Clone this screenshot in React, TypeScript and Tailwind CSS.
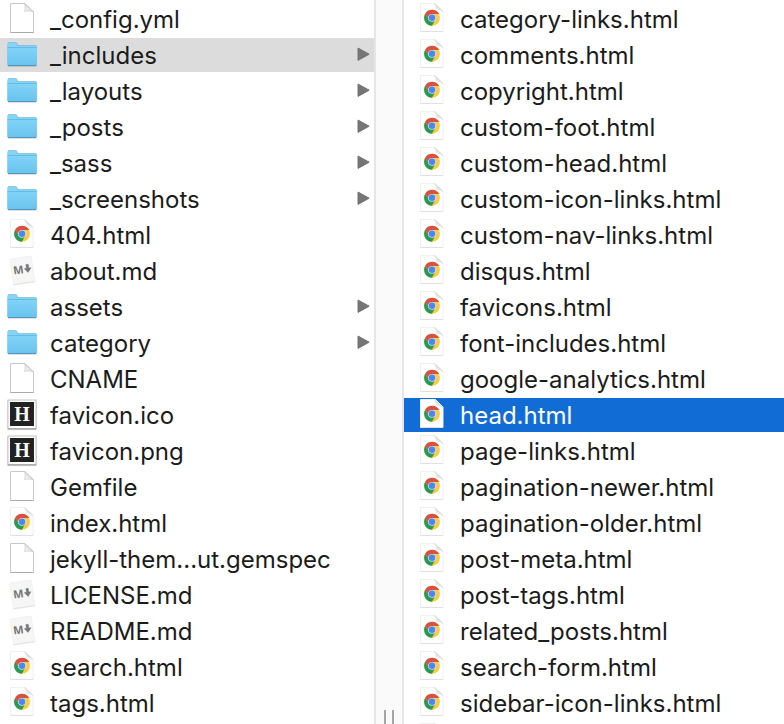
import { useState } from "react";

type Kind = "blank" | "folder" | "chrome" | "markdown" | "favicon";
type Entry = { name: string; kind: Kind };

const rootEntries: Entry[] = [
  { name: "_config.yml", kind: "blank" },
  { name: "_includes", kind: "folder" },
  { name: "_layouts", kind: "folder" },
  { name: "_posts", kind: "folder" },
  { name: "_sass", kind: "folder" },
  { name: "_screenshots", kind: "folder" },
  { name: "404.html", kind: "chrome" },
  { name: "about.md", kind: "markdown" },
  { name: "assets", kind: "folder" },
  { name: "category", kind: "folder" },
  { name: "CNAME", kind: "blank" },
  { name: "favicon.ico", kind: "favicon" },
  { name: "favicon.png", kind: "favicon" },
  { name: "Gemfile", kind: "blank" },
  { name: "index.html", kind: "chrome" },
  { name: "jekyll-them...ut.gemspec", kind: "blank" },
  { name: "LICENSE.md", kind: "markdown" },
  { name: "README.md", kind: "markdown" },
  { name: "search.html", kind: "chrome" },
  { name: "tags.html", kind: "chrome" },
];

const includeEntries: Entry[] = [
  "category-links.html",
  "comments.html",
  "copyright.html",
  "custom-foot.html",
  "custom-head.html",
  "custom-icon-links.html",
  "custom-nav-links.html",
  "disqus.html",
  "favicons.html",
  "font-includes.html",
  "google-analytics.html",
  "head.html",
  "page-links.html",
  "pagination-newer.html",
  "pagination-older.html",
  "post-meta.html",
  "post-tags.html",
  "related_posts.html",
  "search-form.html",
  "sidebar-icon-links.html",
].map((name) => ({ name, kind: "chrome" }));

/* Gradients shared by every file icon */
function IconDefs() {
  return (
    <svg className="absolute size-0" aria-hidden="true">
      <defs>
        <linearGradient id="folder-front" x1="0" y1="0" x2="0" y2="1">
          <stop offset="0" stopColor="#82d3f8" />
          <stop offset="1" stopColor="#69c3ee" />
        </linearGradient>
        <linearGradient id="page-fold" x1="0" y1="1" x2="1" y2="0">
          <stop offset="0" stopColor="#ffffff" />
          <stop offset="0.5" stopColor="#e2e2e2" />
          <stop offset="1" stopColor="#fafafa" />
        </linearGradient>
      </defs>
    </svg>
  );
}

function BlankPage() {
  return (
    <>
      <path d="M4.5 1.5H19L27.5 10V30.5H4.5Z" fill="#fff" stroke="#c9c9c9" />
      <path d="M4.5 30.5H27.5" stroke="#aaa" />
      <path d="M18.5 1.5C19.5 4 19.5 7 18.5 9.5C21 8.7 25 8.8 27.5 10Z" fill="url(#page-fold)" stroke="#c4c4c4" strokeWidth="0.7" />
    </>
  );
}

function Folder() {
  return (
    <>
      <path d="M1.5 6Q1.5 4.3 3 4.3H9.5Q10.5 4.3 11 5.3L12 7.3H29.5Q30.7 7.3 30.7 8.5V27H1.5Z" fill="#62b9e2" />
      <path d="M2 9.3V6Q2 4.8 3.2 4.8H9.3Q10.2 4.8 10.6 5.6L11.7 7.9H29.4Q30.2 7.9 30.2 9.3Z" fill="#86d3f5" />
      <path d="M1.5 9.6H30.7V26.6Q30.7 27.6 29.7 27.6H2.5Q1.5 27.6 1.5 26.6Z" fill="url(#folder-front)" />
      <path d="M1.5 9.5H30.7" stroke="#63b7de" strokeWidth="0.8" />
      <path d="M1.8 27.5H30.4" stroke="#5199ba" strokeWidth="1" />
      <path d="M2 28.5H30.2" stroke="#000" strokeOpacity="0.12" />
    </>
  );
}

function ChromePage() {
  return (
    <>
      <path d="M4.5 1.5H19.5L27 9V29.5H4.5Z" fill="#fff" stroke="#f0f0f0" />
      <path d="M4.5 29.5H27" stroke="#e0e0e0" />
      <path d="M17.5 1.5C19.5 3.5 20 5.5 19.8 8C22 7.8 25 8 27 9.5Z" fill="url(#page-fold)" />
      <path d="M18.5 1.8L26.8 9.5" stroke="#d0d0d0" strokeWidth="0.8" />
      <circle cx="16" cy="15.8" r="7.9" fill="#fbcb43" />
      <path d="M9.16 11.85A7.9 7.9 0 0 0 16 23.7L19.2 17.65L16 15.8L12.8 17.65Z" fill="#249b57" />
      <path d="M9.16 11.85A7.9 7.9 0 0 1 23.2 12.1H16L12.8 17.65Z" fill="#d85140" />
      <circle cx="16" cy="15.8" r="3.9" fill="#d5e0f5" />
      <circle cx="16" cy="15.8" r="3.2" fill="#4a87ee" />
    </>
  );
}

function MarkdownPage() {
  return (
    <g transform="rotate(-8 16 16)">
      <path d="M5.5 3.5H27V29.5H5.5Z" fill="#f6f6f6" stroke="#f1f1f1" />
      <path d="M5.5 29.5H27" stroke="#e2e2e2" />
      <text x="7.2" y="19.2" className="fill-[#777] font-['Open_Sans',sans-serif] text-[11px] font-bold">M</text>
      <path d="M20.6 11.2H23V15H25.2L21.8 19.3L18.4 15H20.6Z" fill="#777" stroke="#777" strokeWidth="0.4" />
    </g>
  );
}

function FaviconImage() {
  return (
    <>
      <rect x="1" y="2.2" width="30" height="30" rx="1" fill="#000" fillOpacity="0.12" />
      <rect x="2" y="2" width="28" height="28.5" fill="#fff" stroke="#c4c4c4" />
      <path d="M2 31H30" stroke="#999" />
      <rect x="4" y="4" width="24" height="24" fill="#222" />
      <text x="16" y="22.8" textAnchor="middle" className="fill-white font-['Liberation_Serif',serif] text-[20px] font-bold">H</text>
    </>
  );
}

const icons = {
  blank: BlankPage,
  folder: Folder,
  chrome: ChromePage,
  markdown: MarkdownPage,
  favicon: FaviconImage,
};

function FileIcon({ kind }: { kind: Kind }) {
  const Drawing = icons[kind];
  return (
    <svg viewBox="0 0 32 34" fill="none" className="h-[34px] w-8 shrink-0" aria-hidden="true">
      <Drawing />
    </svg>
  );
}

type ColumnProps = {
  label: string;
  entries: Entry[];
  selected: string;
  onSelect: (name: string) => void;
  rowClass: string;
  selectedClass: string;
  continues?: boolean;
};

function Column({ label, entries, selected, onSelect, rowClass, selectedClass, continues }: ColumnProps) {
  return (
    <ul aria-label={label} className="flex flex-col gap-0.5 pt-0.5">
      {entries.map(({ name, kind }) => (
        <li key={name}>
          <button
            type="button"
            onClick={() => onSelect(name)}
            className={`flex h-[34px] w-full items-center gap-3 text-left whitespace-nowrap ${rowClass} ${name === selected ? selectedClass : ""}`}
          >
            <FileIcon kind={kind} />
            <span className="flex-1 pt-0.5">{name}</span>
            {kind === "folder" && (
              <svg viewBox="0 0 14 16" className="h-4 w-3.5 shrink-0" aria-hidden="true">
                <path d="M2 1L13.2 7.2L2 13.4Z" fill="#757575" stroke="#757575" strokeLinejoin="round" />
              </svg>
            )}
          </button>
        </li>
      ))}
      {continues && (
        <li className={rowClass} aria-hidden="true">
          <FileIcon kind="chrome" />
        </li>
      )}
    </ul>
  );
}

export default function App() {
  const [folder, setFolder] = useState("_includes");
  const [file, setFile] = useState("head.html");

  return (
    <main className="flex h-screen overflow-hidden bg-white font-[Inter,'Liberation_Sans',sans-serif] text-2xl text-[#1c1c1c]">
      <IconDefs />
      <section className="min-w-0 flex-[374] overflow-hidden">
        <Column
          label="Project files"
          entries={rootEntries}
          selected={folder}
          onSelect={setFolder}
          rowClass="pr-1 pl-1.5"
          selectedClass="bg-[#dcdcdc]"
        />
      </section>
      <div className="flex w-[30px] shrink-0 items-end justify-center gap-1.5 border-x-2 border-[#e6e6e6] bg-[#fafafa]">
        <span className="h-3.5 w-0.5 bg-[#a5a5a5]" />
        <span className="h-3.5 w-0.5 bg-[#a5a5a5]" />
      </div>
      <section className="min-w-0 flex-[380] overflow-hidden">
        <Column
          label="Folder contents"
          entries={includeEntries}
          selected={file}
          onSelect={setFile}
          rowClass="px-3"
          selectedClass="bg-[#116cd6] text-white"
          continues
        />
      </section>
    </main>
  );
}
